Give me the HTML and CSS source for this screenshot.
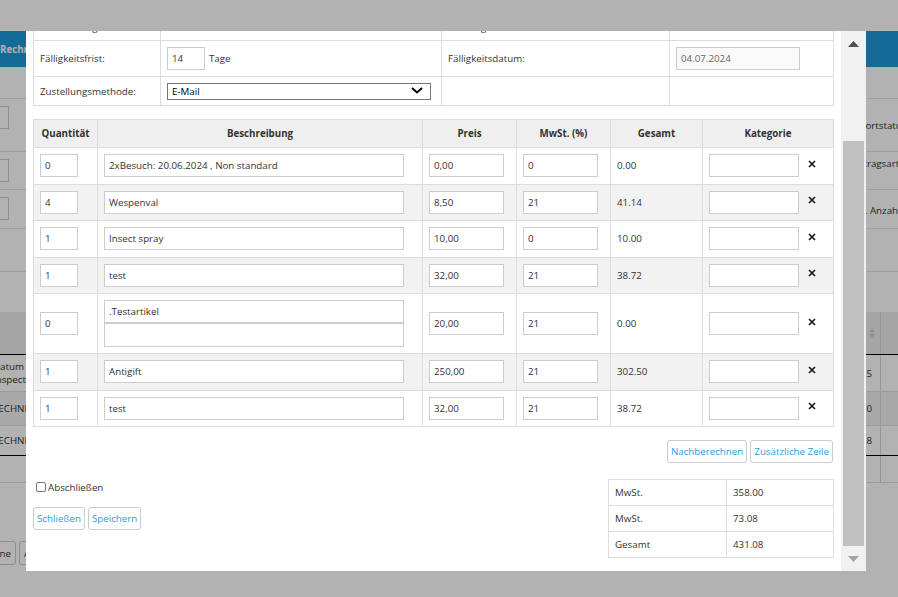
FILE: index.html
```html
<!DOCTYPE html>
<html lang="de">
<head>
<meta charset="utf-8">
<title>Rechnung bearbeiten</title>
<link rel="stylesheet" href="styles.css">
</head>
<body>
<div class="page">
  <div class="appbar"><span class="appbar-title">Rechnungen</span></div>

  <div class="bg-form">
    <div class="bg-row bg-row-1">
      <div class="bg-left"><span class="bg-input"></span></div>
      <div></div>
      <div class="bg-label bg-label-1">Reportstatus</div>
    </div>
    <div class="bg-row bg-row-2">
      <div class="bg-left"><span class="bg-input"></span></div>
      <div></div>
      <div class="bg-label bg-label-2">Auftragsart</div>
    </div>
    <div class="bg-row bg-row-3">
      <div class="bg-left"><span class="bg-input"></span></div>
      <div></div>
      <div class="bg-label bg-label-3">Inst. Anzahl</div>
    </div>
    <div class="bg-row bg-row-4">
      <div></div><div></div><div></div>
    </div>
  </div>

  <div class="bg-table">
    <div class="bg-tr bg-thead">
      <div class="bg-main bg-main-head">
        <svg class="bg-sort" width="6" height="10" viewBox="0 0 6 10"><polygon points="0,4 3,0 6,4" fill="#cfcfcf"/><polygon points="0,6 3,10 6,6" fill="#cfcfcf"/></svg>
      </div>
      <div class="bg-end"></div>
    </div>
    <div class="bg-tr bg-tr-1">
      <div class="bg-main"><span class="bg-lead">Datum<br>Inspection</span><span class="bg-num">5</span></div>
      <div class="bg-end"></div>
    </div>
    <div class="bg-tr bg-tr-2">
      <div class="bg-main"><span class="bg-lead">TECHNIKER</span><span class="bg-num">0</span></div>
      <div class="bg-end"></div>
    </div>
    <div class="bg-tr bg-tr-3">
      <div class="bg-main"><span class="bg-lead">TECHNIKER</span><span class="bg-num">8</span></div>
      <div class="bg-end"></div>
    </div>
    <div class="bg-tr bg-tr-4">
      <div class="bg-main"></div>
      <div class="bg-end"></div>
    </div>
  </div>

  <div class="bg-buttons">
    <div class="bg-btn-clip"><span class="bg-btn">Termine</span></div>
    <span class="bg-btn">Abbrechen</span>
  </div>
</div>

<div class="overlay"></div>

<div class="modal">
  <div class="modal-body">
    <div class="modal-content">

      <div class="form-grid">
        <div class="fcell fcell-top">Verwendungszweck:</div>
        <div class="fcell fcell-top"></div>
        <div class="fcell fcell-top">Leistungsdatum:</div>
        <div class="fcell fcell-top"></div>

        <div class="fcell">Fälligkeitsfrist:</div>
        <div class="fcell"><input class="inp w-days" value="14"><span class="unit">Tage</span></div>
        <div class="fcell">Fälligkeitsdatum:</div>
        <div class="fcell"><input class="inp inp-ro w-date" value="04.07.2024" readonly></div>

        <div class="fcell">Zustellungsmethode:</div>
        <div class="fcell">
          <div class="select-wrap">
            <select class="sel"><option>E-Mail</option></select>
            <svg class="chev" width="12" height="7" viewBox="0 0 12 7"><polyline points="1,1 6,5.5 11,1" fill="none" stroke="#000" stroke-width="2"/></svg>
          </div>
        </div>
        <div class="fcell"></div>
        <div class="fcell"></div>
      </div>

      <div class="items-grid">
        <div class="ic ih">Quantität</div>
        <div class="ic ih">Beschreibung</div>
        <div class="ic ih">Preis</div>
        <div class="ic ih">MwSt. (%)</div>
        <div class="ic ih">Gesamt</div>
        <div class="ic ih">Kategorie</div>

        <div class="ic"><input class="inp w-qty" value="0"></div>
        <div class="ic"><input class="inp w-desc" value="2xBesuch: 20.06.2024 , Non standard"></div>
        <div class="ic"><input class="inp w-price" value="0,00"></div>
        <div class="ic"><input class="inp w-vat" value="0"></div>
        <div class="ic">0.00</div>
        <div class="ic"><input class="inp w-cat" value=""><svg class="del" width="8" height="8" viewBox="0 0 8 8"><path d="M1 1L7 7M7 1L1 7" stroke="#1a1a1a" stroke-width="1.7"/></svg></div>

        <div class="ic alt"><input class="inp w-qty" value="4"></div>
        <div class="ic alt"><input class="inp w-desc" value="Wespenval"></div>
        <div class="ic alt"><input class="inp w-price" value="8,50"></div>
        <div class="ic alt"><input class="inp w-vat" value="21"></div>
        <div class="ic alt">41.14</div>
        <div class="ic alt"><input class="inp w-cat" value=""><svg class="del" width="8" height="8" viewBox="0 0 8 8"><path d="M1 1L7 7M7 1L1 7" stroke="#1a1a1a" stroke-width="1.7"/></svg></div>

        <div class="ic"><input class="inp w-qty" value="1"></div>
        <div class="ic"><input class="inp w-desc" value="Insect spray"></div>
        <div class="ic"><input class="inp w-price" value="10,00"></div>
        <div class="ic"><input class="inp w-vat" value="0"></div>
        <div class="ic">10.00</div>
        <div class="ic"><input class="inp w-cat" value=""><svg class="del" width="8" height="8" viewBox="0 0 8 8"><path d="M1 1L7 7M7 1L1 7" stroke="#1a1a1a" stroke-width="1.7"/></svg></div>

        <div class="ic alt"><input class="inp w-qty" value="1"></div>
        <div class="ic alt"><input class="inp w-desc" value="test"></div>
        <div class="ic alt"><input class="inp w-price" value="32,00"></div>
        <div class="ic alt"><input class="inp w-vat" value="21"></div>
        <div class="ic alt">38.72</div>
        <div class="ic alt"><input class="inp w-cat" value=""><svg class="del" width="8" height="8" viewBox="0 0 8 8"><path d="M1 1L7 7M7 1L1 7" stroke="#1a1a1a" stroke-width="1.7"/></svg></div>

        <div class="ic"><input class="inp w-qty" value="0"></div>
        <div class="ic ic-stack"><input class="inp w-desc" value=".Testartikel"><textarea class="ta w-desc"></textarea></div>
        <div class="ic"><input class="inp w-price" value="20,00"></div>
        <div class="ic"><input class="inp w-vat" value="21"></div>
        <div class="ic">0.00</div>
        <div class="ic"><input class="inp w-cat" value=""><svg class="del" width="8" height="8" viewBox="0 0 8 8"><path d="M1 1L7 7M7 1L1 7" stroke="#1a1a1a" stroke-width="1.7"/></svg></div>

        <div class="ic alt"><input class="inp w-qty" value="1"></div>
        <div class="ic alt"><input class="inp w-desc" value="Antigift"></div>
        <div class="ic alt"><input class="inp w-price" value="250,00"></div>
        <div class="ic alt"><input class="inp w-vat" value="21"></div>
        <div class="ic alt">302.50</div>
        <div class="ic alt"><input class="inp w-cat" value=""><svg class="del" width="8" height="8" viewBox="0 0 8 8"><path d="M1 1L7 7M7 1L1 7" stroke="#1a1a1a" stroke-width="1.7"/></svg></div>

        <div class="ic"><input class="inp w-qty" value="1"></div>
        <div class="ic"><input class="inp w-desc" value="test"></div>
        <div class="ic"><input class="inp w-price" value="32,00"></div>
        <div class="ic"><input class="inp w-vat" value="21"></div>
        <div class="ic">38.72</div>
        <div class="ic"><input class="inp w-cat" value=""><svg class="del" width="8" height="8" viewBox="0 0 8 8"><path d="M1 1L7 7M7 1L1 7" stroke="#1a1a1a" stroke-width="1.7"/></svg></div>
      </div>

      <div class="actions">
        <button class="btn">Nachberechnen</button>
        <button class="btn">Zusätzliche Zeile</button>
      </div>

      <div class="bottom">
        <div class="bottom-left">
          <label class="check-row"><input type="checkbox" class="chk"><span>Abschließen</span></label>
          <div class="left-buttons">
            <button class="btn">Schließen</button>
            <button class="btn">Speichern</button>
          </div>
        </div>
        <div class="summary">
          <div class="sc">MwSt.</div><div class="sc">358.00</div>
          <div class="sc">MwSt.</div><div class="sc">73.08</div>
          <div class="sc">Gesamt</div><div class="sc">431.08</div>
        </div>
      </div>

    </div>
  </div>
  <div class="scrollbar">
    <div class="sb-btn"><svg width="11" height="6" viewBox="0 0 11 6"><polygon points="0,6 5.5,0 11,6" fill="#505050"/></svg></div>
    <div class="sb-track"><div class="sb-thumb"></div></div>
    <div class="sb-btn"><svg width="11" height="6" viewBox="0 0 11 6"><polygon points="0,0 5.5,6 11,0" fill="#a3a3a3"/></svg></div>
  </div>
</div>
</body>
</html>
```

FILE: styles.css
```css
* { box-sizing: border-box; }
html, body { margin: 0; height: 100%; }
body {
  font-family: "Open Sans", "DejaVu Sans", sans-serif;
  font-size: 9.75px;
  color: #333;
  background: #fff;
  overflow: hidden;
}

/* ---------- background page ---------- */
.page { padding-top: 31px; }
.appbar {
  height: 36px;
  background: #1e98db;
  display: flex;
  align-items: center;
}
.appbar-title { color: #fff; font-weight: 700; font-size: 9.75px; white-space: nowrap; }

.bg-form { margin-top: 31px; }
.bg-row {
  display: grid;
  grid-template-columns: 9px 839px 1fr;
  border-top: 1px solid #e6e6e6;
}
.bg-row-1 { height: 53px; }
.bg-row-2 { height: 38px; }
.bg-row-3 { height: 39px; }
.bg-row-4 { height: 44px; border-bottom: 1px solid #e6e6e6; }
.bg-left {
  display: flex;
  justify-content: flex-end;
  overflow: hidden;
  padding-top: 7px;
}
.bg-input {
  flex-shrink: 0;
  width: 120px;
  height: 23px;
  border: 1px solid #cfcfcf;
  background: #fff;
}
.bg-label { white-space: nowrap; line-height: 13px; }
.bg-label-1 { padding-top: 20px; }
.bg-label-2 { padding-top: 5px; }
.bg-label-3 { padding-top: 14px; }

.bg-table { margin-top: 40px; margin-left: -7px; }
.bg-tr { display: grid; grid-template-columns: 1fr 18px; }
.bg-thead { height: 43px; background: #ececec; border-bottom: 1px solid #000; }
.bg-tr-1 { height: 37px; border-bottom: 1px solid #e0e0e0; }
.bg-tr-2 { height: 34px; background: #f3f3f3; border-bottom: 1px solid #e0e0e0; }
.bg-tr-3 { height: 30px; border-bottom: 1px solid #000; }
.bg-tr-4 { height: 27px; border-bottom: 1px solid #e0e0e0; }
.bg-main {
  display: flex;
  justify-content: space-between;
  align-items: center;
  padding-right: 8px;
  line-height: 13px;
  white-space: nowrap;
}
.bg-main-head { justify-content: flex-end; padding-right: 5px; }
.bg-end { border-left: 1px solid #d9d9d9; }

.bg-buttons { margin-top: 58px; display: flex; gap: 3px; }
.bg-btn-clip { width: 16px; display: flex; justify-content: flex-end; overflow: hidden; }
.bg-btn {
  flex-shrink: 0;
  height: 24px;
  padding: 0 4px;
  border: 1px solid #cccccc;
  border-radius: 3px;
  background: #fff;
  display: flex;
  align-items: center;
  white-space: nowrap;
}

/* ---------- overlay + modal ---------- */
.overlay { position: fixed; inset: 0; background: rgba(0, 0, 0, 0.3); }
.modal {
  position: fixed;
  left: 26px;
  top: 31px;
  width: 840px;
  height: 540px;
  background: #fff;
  display: flex;
}
.modal-body { flex: 1; overflow: hidden; padding: 0 7px; }
.modal-content { margin-top: -22px; }

.inp {
  height: 23px;
  border: 1px solid #cccccc;
  padding: 0 4px;
  margin: 0;
  font: inherit;
  color: #333;
  background: #fff;
  border-radius: 0;
  outline: none;
  flex-shrink: 0;
}
.inp-ro { background: #f9f9f9; color: #666; }
.w-days { width: 38px; }
.w-date { width: 124px; }
.w-qty { width: 38px; }
.w-desc { width: 300px; }
.w-price { width: 75px; }
.w-vat { width: 75px; }
.w-cat { width: 90px; }

.form-grid {
  display: grid;
  grid-template-columns: 127px 281px 228px 164px;
  grid-template-rows: 31px 36px 29px;
  border-left: 1px solid #dddddd;
  border-top: 1px solid #dddddd;
}
.fcell {
  border-right: 1px solid #dddddd;
  border-bottom: 1px solid #dddddd;
  padding: 0 6px;
  display: flex;
  align-items: center;
  white-space: nowrap;
}
.fcell-top { padding-top: 4px; }
.unit { margin-left: 4px; }
.select-wrap { position: relative; width: 264px; height: 17px; }
.sel {
  -webkit-appearance: none;
  appearance: none;
  width: 100%;
  height: 17px;
  margin: 0;
  border: 1px solid #767676;
  border-radius: 0;
  background: #fff;
  padding: 0 4px;
  font: inherit;
  color: #000;
  outline: none;
}
.chev { position: absolute; right: 8px; top: 4px; pointer-events: none; }

.items-grid {
  margin-top: 13px;
  display: grid;
  grid-template-columns: 64px 325px 94px 94px 92px 131px;
  grid-template-rows: 28px 36.5px 36.5px 36.5px 36.5px 60px 36.5px 36.5px;
  border-left: 1px solid #dddddd;
  border-top: 1px solid #dddddd;
}
.ic {
  border-right: 1px solid #dddddd;
  border-bottom: 1px solid #dddddd;
  padding: 0 6px;
  display: flex;
  align-items: center;
  white-space: nowrap;
}
.ih { background: #efefef; font-weight: 700; justify-content: center; }
.alt { background: #f2f2f2; }
.ic-stack { flex-direction: column; justify-content: center; align-items: flex-start; }
.ta {
  display: block;
  height: 24px;
  border: 1px solid #cccccc;
  margin: 0;
  padding: 2px 4px;
  font: inherit;
  resize: none;
  outline: none;
  background: #fff;
}
.del { margin-left: 9px; margin-bottom: 4px; flex-shrink: 0; }

.btn {
  height: 23px;
  padding: 0 3px;
  margin: 0;
  border: 1px solid #cccccc;
  border-radius: 3px;
  background: #fff;
  color: #2a9fd8;
  font: inherit;
  white-space: nowrap;
  cursor: pointer;
}
.actions {
  margin-top: 13px;
  display: flex;
  justify-content: flex-end;
  gap: 3px;
  padding-right: 1px;
}

.bottom {
  margin-top: 16px;
  display: flex;
  justify-content: space-between;
  align-items: flex-start;
}
.bottom-left { display: flex; flex-direction: column; }
.check-row {
  margin: 2px 0 0 3px;
  height: 12px;
  display: flex;
  align-items: center;
  gap: 2px;
}
.chk {
  -webkit-appearance: none;
  appearance: none;
  width: 10px;
  height: 10px;
  margin: 0;
  border: 1px solid #767676;
  border-radius: 2px;
  background: #fff;
}
.left-buttons { margin-top: 14px; display: flex; gap: 3px; }

.summary {
  display: grid;
  grid-template-columns: 118px 107px;
  grid-auto-rows: 26px;
  border-left: 1px solid #dddddd;
  border-top: 1px solid #dddddd;
}
.sc {
  border-right: 1px solid #dddddd;
  border-bottom: 1px solid #dddddd;
  padding: 0 6px;
  display: flex;
  align-items: center;
}

.scrollbar {
  width: 25px;
  background: #f1f1f1;
  display: flex;
  flex-direction: column;
}
.sb-btn { height: 25px; display: flex; align-items: center; justify-content: center; }
.sb-track { flex: 1; padding: 85px 2px 0; }
.sb-thumb { height: 405px; background: #c1c1c1; }
```
